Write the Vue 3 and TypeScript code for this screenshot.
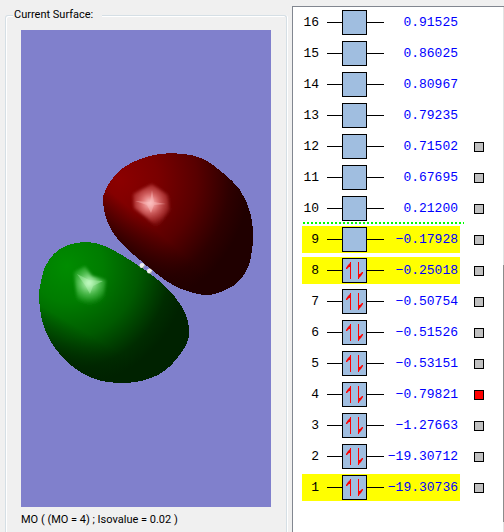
<script setup lang="ts">
import { ref } from 'vue'

interface Orbital {
  n: number
  energy: string
  occupied: boolean
  highlighted: boolean
  selectable: boolean
}

type Point = [number, number]

const energies: string[] = [
  '0.91525', '0.86025', '0.80967', '0.79235', '0.71502', '0.67695', '0.21200', '−0.17928',
  '−0.25018', '−0.50754', '−0.51526', '−0.53151', '−0.79821', '−1.27663', '−19.30712', '−19.30736',
]

const orbitals: Orbital[] = energies.map((energy, i) => {
  const n = 16 - i
  return { n, energy, occupied: n <= 8, highlighted: [9, 8, 1].includes(n), selectable: n <= 12 }
})

const shown = ref<number[]>([4])

// Closed smooth curve through the points of an isosurface outline
function outline(points: Point[]): string {
  const at = (i: number): Point => points[(i + points.length) % points.length]
  const curves = points.map((p, i) => {
    const prev = at(i - 1)
    const next = at(i + 1)
    const after = at(i + 2)
    const c1 = [p[0] + (next[0] - prev[0]) / 6, p[1] + (next[1] - prev[1]) / 6]
    const c2 = [next[0] - (after[0] - p[0]) / 6, next[1] - (after[1] - p[1]) / 6]
    return `C${c1.join(' ')} ${c2.join(' ')} ${next.join(' ')}`
  })
  return `M${points[0].join(' ')}${curves.join('')}Z`
}

const redLobe = outline([
  [82, 173], [83, 164], [89, 152], [102, 138], [119, 129], [139, 124], [162, 124], [182, 129],
  [202, 143], [219, 160], [229, 182], [232, 203], [230, 227], [224, 243], [212, 256], [189, 265],
  [169, 262], [152, 255], [136, 244], [119, 230], [99, 212], [87, 193],
])

const greenLobe = outline([
  [18, 268], [19, 257], [24, 237], [34, 223], [47, 215], [66, 212], [84, 216], [104, 227],
  [121, 238], [137, 250], [154, 267], [165, 285], [168, 302], [164, 317], [147, 338], [127, 349],
  [101, 353], [74, 349], [51, 336], [34, 318], [22, 294],
])
</script>

<template>
  <main class="window">
    <fieldset class="surface">
      <legend>Current Surface:</legend>
      <svg class="view" viewBox="0 0 250 477" role="img" aria-label="Molecular orbital surface">
        <defs>
          <radialGradient id="red" gradientUnits="userSpaceOnUse" cx="98" cy="150" r="130">
            <stop offset="0" stop-color="#8c0000" />
            <stop offset="0.3" stop-color="#7a0000" />
            <stop offset="0.6" stop-color="#580000" />
            <stop offset="0.85" stop-color="#2e0000" />
            <stop offset="1" stop-color="#200000" />
          </radialGradient>
          <radialGradient id="green" gradientUnits="userSpaceOnUse" cx="46" cy="236" r="120">
            <stop offset="0" stop-color="#008c00" />
            <stop offset="0.3" stop-color="#007c00" />
            <stop offset="0.6" stop-color="#005a00" />
            <stop offset="0.86" stop-color="#002c00" />
            <stop offset="1" stop-color="#002200" />
          </radialGradient>
          <linearGradient id="redEdge" gradientUnits="userSpaceOnUse" x1="130" y1="196" x2="108" y2="222">
            <stop offset="0" stop-color="#200000" stop-opacity="0" />
            <stop offset="1" stop-color="#200000" stop-opacity="0.8" />
          </linearGradient>
          <linearGradient id="greenEdge" gradientUnits="userSpaceOnUse" x1="68" y1="304" x2="48" y2="338">
            <stop offset="0" stop-color="#002200" stop-opacity="0" />
            <stop offset="1" stop-color="#002200" stop-opacity="0.8" />
          </linearGradient>
          <radialGradient id="redGlow" gradientUnits="userSpaceOnUse" cx="129" cy="173" r="24">
            <stop offset="0" stop-color="#ffd0d0" />
            <stop offset="0.3" stop-color="#ed8585" stop-opacity="0.9" />
            <stop offset="0.7" stop-color="#c84848" stop-opacity="0.6" />
            <stop offset="1" stop-color="#a02020" stop-opacity="0.1" />
          </radialGradient>
          <radialGradient id="greenGlow" gradientUnits="userSpaceOnUse" cx="68" cy="253" r="23">
            <stop offset="0" stop-color="#d0ffd0" />
            <stop offset="0.3" stop-color="#85dd85" stop-opacity="0.9" />
            <stop offset="0.7" stop-color="#48c048" stop-opacity="0.5" />
            <stop offset="1" stop-color="#109010" stop-opacity="0" />
          </radialGradient>
          <filter id="soft">
            <feGaussianBlur stdDeviation="1.500" />
          </filter>
        </defs>
        <rect width="250" height="477" fill="#8080cc" />
        <g shape-rendering="crispEdges">
          <path :d="redLobe" fill="url(#red)" />
          <path :d="redLobe" fill="url(#redEdge)" />
          <path :d="greenLobe" fill="url(#green)" />
          <path :d="greenLobe" fill="url(#greenEdge)" />
        </g>
        <g filter="url(#soft)">
          <path d="M112 164L131 154L147 165L149 180L136 198L126 188L113 178Z" fill="url(#redGlow)" />
          <path d="M53 242L64 236L71 246L85 250L83 270L72 278L56 270Z" fill="url(#greenGlow)" />
        </g>
        <path d="M114 171L129 172L131 160L133 172L145 174L133 175L130 183L126 175Z" fill="#ffc4c4" fill-opacity="0.4" />
        <path d="M56 244L68 250L82 251L72 256L69 264L64 255Z" fill="#c4ffc4" fill-opacity="0.35" />
        <circle cx="121" cy="235.500" r="2.500" fill="#eee" />
        <circle cx="128.500" cy="241" r="2.500" fill="#eee" />
        <path d="M121 238A2.500 2.500 0 0 0 123.500 235.500ZM128.500 243.500A2.500 2.500 0 0 0 131 241Z" fill="#888" />
      </svg>
      <p class="caption">MO ( (MO = 4) ; Isovalue = 0.02 )</p>
    </fieldset>

    <section class="levels" aria-label="Orbital energies">
      <div class="list">
        <template v-for="o in orbitals" :key="o.n">
          <div class="row">
            <div class="level" :class="{ highlighted: o.highlighted }">
              <label class="number" :for="o.selectable ? 'mo' + o.n : undefined">{{ o.n }}</label>
              <span class="line"></span>
              <span class="box">
                <svg v-if="o.occupied" width="23" height="23" viewBox="0 0 23 23" fill="#f00">
                  <path d="M7 3H8V20H7Z" />
                  <path d="M8 3V8L6 8L4 10H3V9L5 6Z" />
                  <path d="M15 3H16V20H15Z" />
                  <path d="M15 20V15L17 15L19 13H20V14L18 17Z" />
                </svg>
              </span>
              <span class="line"></span>
              <span class="energy">{{ o.energy }}</span>
            </div>
            <input v-if="o.selectable" :id="'mo' + o.n" v-model="shown" class="tick" type="checkbox" :value="o.n">
          </div>
          <div v-if="o.n > 1" class="gap" :class="{ divider: o.n === 10 }"></div>
        </template>
      </div>
      <div class="scrollbar" aria-hidden="true"><div class="thumb"></div></div>
    </section>
  </main>
</template>

<style>
body {
  background: #f0f0f0;
}
</style>

<style scoped>
.window {
  box-sizing: border-box;
  display: grid;
  grid-template-columns: minmax(0, 282fr) minmax(0, 212fr);
  gap: 5px;
  min-height: 100vh;
  padding: 6px 0 0 5px;
  overflow: hidden;
  color: #000;
  font-family: Roboto, "Liberation Sans", sans-serif;
  font-size: 11px;
}

.surface {
  box-sizing: border-box;
  min-width: 0;
  margin: 2px 0 0;
  padding: 8px 15px 3px;
  border: 1px solid #d5dfe5;
  border-bottom: 0;
  border-radius: 3px 3px 0 0;
  box-shadow: inset 1px 1px #fff, 1px 0 #fff;
}

legend {
  margin-left: -8px;
  padding: 0 9px 0 1px;
  background: #f0f0f0;
  line-height: 14px;
}

.view {
  display: block;
  width: 100%;
  height: auto;
}

.caption {
  margin: 5px 0 0;
  line-height: 16px;
  white-space: nowrap;
}

.levels {
  display: flex;
  border: solid #828790;
  border-width: 1px 0 0 1px;
  background: #fff;
  font-family: "Liberation Mono", monospace;
  font-size: 13px;
}

.list {
  flex: 1;
  min-width: 0;
  padding: 2px 0 0 9px;
}

.scrollbar {
  display: grid;
  grid-template-rows: 258fr 257fr 10fr;
  width: 1px;
  background: #e3e3e3;
}

.thumb {
  grid-row: 2;
  background: #8c8c8c;
}

.row {
  display: flex;
  align-items: center;
  gap: 14px;
  height: 27px;
}

.level {
  display: flex;
  align-items: center;
  width: 158px;
  height: 27px;
}

.highlighted {
  background: #ff0;
}

.number {
  width: 17px;
  margin-right: 8px;
  text-align: right;
}

.line {
  width: 15px;
  height: 1px;
  background: #000;
}

.box + .line {
  width: 17px;
}

.box {
  box-sizing: border-box;
  width: 25px;
  height: 25px;
  border: 1px solid #000;
  background: #a0bee0;
}

.box svg {
  display: block;
}

.energy {
  flex: 1;
  display: flex;
  justify-content: flex-end;
  padding-right: 2px;
  color: #00f;
}

.tick {
  appearance: none;
  box-sizing: border-box;
  width: 10px;
  height: 10px;
  margin: 0;
  border: 1px solid #000;
  background: #c0c0c0;
}

.tick:checked {
  background: #f00;
}

.gap {
  height: 4px;
}

.divider {
  width: 162px;
  background: repeating-linear-gradient(90deg, transparent 0 1px, #0f0 1px 3px, transparent 3px 4px) 0 0 / 100% 2px no-repeat;
}
</style>
